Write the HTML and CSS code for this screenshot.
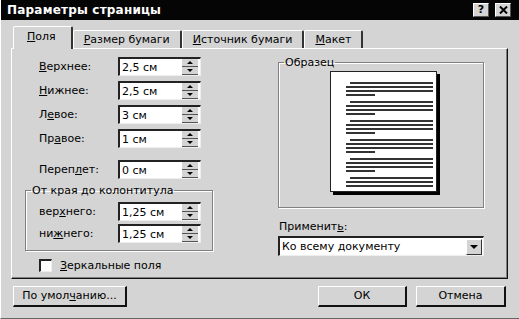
FILE: index.html
```html
<!DOCTYPE html>
<html lang="ru">
<head>
    <meta charset="UTF-8">
    <title>Параметры страницы</title>
    <link rel="stylesheet" href="styles.css">
</head>
<body>

<div class="dialog">
    <div class="titlebar">
        <span class="title">Параметры страницы</span>
        <div class="title-btns">
            <span class="tbtn">?</span>
            <span class="tbtn close">
                <svg width="9" height="8" viewBox="0 0 9 8"><path d="M1 0.5 L8 7.5 M8 0.5 L1 7.5" stroke="#000" stroke-width="2"/></svg>
            </span>
        </div>
    </div>

    <div class="tabs">
        <div class="tab active"><u>П</u>оля</div>
        <div class="tab"><u>Р</u>азмер бумаги</div>
        <div class="tab"><u>И</u>сточник бумаги</div>
        <div class="tab"><u>М</u>акет</div>
    </div>

    <div class="panel">
        <div class="col-left">
            <div class="row">
                <span class="lbl"><u>В</u>ерхнее:</span>
                <div class="spin"><span class="val">2,5 см</span><span class="arrows"><i class="up"></i><i class="down"></i></span></div>
            </div>
            <div class="row">
                <span class="lbl"><u>Н</u>ижнее:</span>
                <div class="spin"><span class="val">2,5 см</span><span class="arrows"><i class="up"></i><i class="down"></i></span></div>
            </div>
            <div class="row">
                <span class="lbl">Л<u>е</u>вое:</span>
                <div class="spin"><span class="val">3 см</span><span class="arrows"><i class="up"></i><i class="down"></i></span></div>
            </div>
            <div class="row">
                <span class="lbl">Пр<u>а</u>вое:</span>
                <div class="spin"><span class="val">1 см</span><span class="arrows"><i class="up"></i><i class="down"></i></span></div>
            </div>
            <div class="row gutter">
                <span class="lbl">Переп<u>л</u>ет:</span>
                <div class="spin"><span class="val">0 см</span><span class="arrows"><i class="up"></i><i class="down"></i></span></div>
            </div>

            <fieldset class="group">
                <legend>От края до колонтитула</legend>
                <div class="row">
                    <span class="lbl">вер<u>х</u>него:</span>
                    <div class="spin"><span class="val">1,25 см</span><span class="arrows"><i class="up"></i><i class="down"></i></span></div>
                </div>
                <div class="row">
                    <span class="lbl">ни<u>ж</u>него:</span>
                    <div class="spin"><span class="val">1,25 см</span><span class="arrows"><i class="up"></i><i class="down"></i></span></div>
                </div>
            </fieldset>

            <div class="check">
                <span class="box"></span>
                <span><u>З</u>еркальные поля</span>
            </div>
        </div>

        <div class="col-right">
            <fieldset class="sample">
                <legend>Образец</legend>
                <div class="page">
                    <div class="para"><i></i><i></i><i></i><i></i></div>
                    <div class="para"><i></i><i></i><i></i><i></i></div>
                    <div class="para"><i></i><i></i><i></i><i></i></div>
                    <div class="para"><i></i><i></i><i></i><i></i></div>
                    <div class="para"><i></i><i></i><i></i><i></i></div>
                    <div class="para"><i></i><i></i><i></i></div>
                </div>
            </fieldset>

            <div class="apply-lbl">Применит<u>ь</u>:</div>
            <div class="select">
                <span class="val">Ко всему документу</span>
                <span class="drop"><i></i></span>
            </div>
        </div>
    </div>

    <div class="buttons">
        <div class="btn default-btn">По умол<u>ч</u>анию...</div>
        <div class="btn ok">ОК</div>
        <div class="btn cancel">Отмена</div>
    </div>
</div>

</body>
</html>
```

FILE: styles.css
```css
body {
    margin: 0;
    background: #d4d4d4;
    font-family: "DejaVu Sans", Verdana, sans-serif;
    font-size: 11px;
    color: #000;
}

u {
    text-decoration: underline;
    text-underline-offset: 1px;
}

.dialog {
    width: 519px;
    height: 319px;
    box-sizing: border-box;
    background: #d4d4d4;
    border-left: 1px solid #fff;
    border-bottom: 1px solid #666;
    display: flex;
    flex-direction: column;
}

/* заголовок окна */
.titlebar {
    height: 20px;
    background: #050505;
    display: flex;
    align-items: center;
    justify-content: space-between;
    padding: 0 8px 0 6px;
}

.title {
    color: #fff;
    font-weight: bold;
    font-size: 12px;
    letter-spacing: 0.2px;
}

.title-btns {
    display: flex;
    gap: 6px;
}

.tbtn {
    width: 16px;
    height: 14px;
    box-sizing: border-box;
    background: #d4d4d4;
    border-top: 1px solid #fff;
    border-left: 1px solid #fff;
    border-right: 1px solid #555;
    border-bottom: 1px solid #555;
    font-weight: bold;
    font-size: 11px;
    line-height: 12px;
    text-align: center;
    display: flex;
    align-items: center;
    justify-content: center;
}

/* вкладки */
.tabs {
    margin-top: 6px;
    padding-left: 12px;
    height: 22px;
    display: flex;
    align-items: flex-end;
    position: relative;
    z-index: 1;
}

.tab {
    height: 17px;
    line-height: 17px;
    padding: 0 10px;
    border-top: 1px solid #fff;
    border-left: 1px solid #fff;
    border-right: 2px solid #333;
    border-radius: 2px 2px 0 0;
}

.tab.active {
    height: 22px;
    line-height: 20px;
    padding: 0 15px 0 13px;
    margin-bottom: -1px;
    background: #d4d4d4;
}

/* панель */
.panel {
    margin: 0 11px 0 10px;
    height: 231px;
    box-sizing: border-box;
    border-top: 1px solid #fff;
    border-left: 1px solid #fff;
    border-right: 1px solid #111;
    border-bottom: 1px solid #111;
    box-shadow: inset -1px -1px 0 #808080;
    display: flex;
}

.col-left {
    width: 255px;
    padding: 8px 0 0 13px;
    box-sizing: border-box;
}

.row {
    display: flex;
    align-items: center;
    padding-left: 14px;
    margin-bottom: 5px;
}

.row.gutter {
    margin-top: 12px;
}

.lbl {
    width: 79px;
}

.spin {
    width: 83px;
    height: 19px;
    box-sizing: border-box;
    background: #fff;
    border-top: 2px solid #222;
    border-left: 2px solid #222;
    border-right: 1px solid #eee;
    border-bottom: 1px solid #eee;
    display: flex;
    align-items: center;
    justify-content: space-between;
}

.spin .val {
    padding-left: 2px;
}

.arrows {
    width: 16px;
    height: 16px;
    margin-right: 2px;
    display: flex;
    flex-direction: column;
    background: #d4d4d4;
}

.arrows i {
    flex: 1;
    display: flex;
    align-items: center;
    justify-content: center;
    border-bottom: 1px solid #555;
}

.arrows i::after {
    content: "";
    border-left: 3px solid transparent;
    border-right: 3px solid transparent;
}

.arrows .up::after {
    border-bottom: 3px solid #000;
}

.arrows .down::after {
    border-top: 3px solid #000;
}

/* группа колонтитулов */
.group {
    margin: 5px 0 0 0;
    width: 188px;
    box-sizing: border-box;
    padding: 5px 0 4px 0;
    border: 1px solid #808080;
    box-shadow: 1px 1px 0 #fff, inset 1px 1px 0 #fff;
}

.group legend,
.sample legend {
    padding: 0 1px;
    margin-left: 5px;
}

.group .row {
    padding-left: 13px;
    margin-bottom: 3px;
}

.check {
    display: flex;
    align-items: center;
    gap: 8px;
    padding-left: 14px;
    margin-top: 8px;
}

.box {
    width: 13px;
    height: 13px;
    box-sizing: border-box;
    background: #fff;
    border-top: 2px solid #222;
    border-left: 2px solid #222;
    border-right: 1px solid #eee;
    border-bottom: 1px solid #eee;
}

/* правая колонка */
.col-right {
    width: 206px;
    margin-left: 11px;
    padding-top: 7px;
}

.sample {
    margin: 0;
    height: 152px;
    box-sizing: border-box;
    padding: 2px 0 0 0;
    border: 1px solid #808080;
    box-shadow: 1px 1px 0 #fff, inset 1px 1px 0 #fff;
    display: flex;
    justify-content: center;
}

.page {
    width: 107px;
    height: 121px;
    box-sizing: border-box;
    margin-left: 5px;
    background: #fff;
    border: 1px solid #222;
    box-shadow: 3px 3px 0 #000;
    padding: 10px 3px 0 15px;
    display: flex;
    flex-direction: column;
    gap: 5px;
}

.para {
    display: flex;
    flex-direction: column;
    gap: 2px;
}

.para i {
    height: 2px;
    background: #333;
}

.para i:first-child {
    margin-left: 4px;
}

.para i:nth-child(4) {
    width: 29px;
}

.apply-lbl {
    margin-top: 12px;
    padding-left: 1px;
}

.select {
    margin-top: 3px;
    height: 20px;
    box-sizing: border-box;
    background: #fff;
    border-top: 2px solid #222;
    border-left: 2px solid #222;
    border-right: 1px solid #eee;
    border-bottom: 1px solid #eee;
    display: flex;
    align-items: center;
    justify-content: space-between;
}

.select .val {
    padding-left: 2px;
}

.drop {
    width: 16px;
    height: 16px;
    margin-right: 1px;
    box-sizing: border-box;
    background: #d4d4d4;
    border-top: 1px solid #fff;
    border-left: 1px solid #fff;
    border-right: 1px solid #333;
    border-bottom: 1px solid #333;
    display: flex;
    align-items: center;
    justify-content: center;
}

.drop i {
    border-left: 4px solid transparent;
    border-right: 4px solid transparent;
    border-top: 4px solid #000;
}

/* кнопки внизу */
.buttons {
    margin-top: 7px;
    padding: 0 13px 0 12px;
    display: flex;
    align-items: center;
}

.btn {
    height: 21px;
    box-sizing: border-box;
    line-height: 18px;
    text-align: center;
    border-top: 1px solid #fff;
    border-left: 1px solid #fff;
    border-right: 2px solid #111;
    border-bottom: 2px solid #111;
}

.default-btn {
    width: 114px;
}

.ok {
    width: 89px;
    margin-left: auto;
}

.cancel {
    width: 90px;
    margin-left: 9px;
}
```
